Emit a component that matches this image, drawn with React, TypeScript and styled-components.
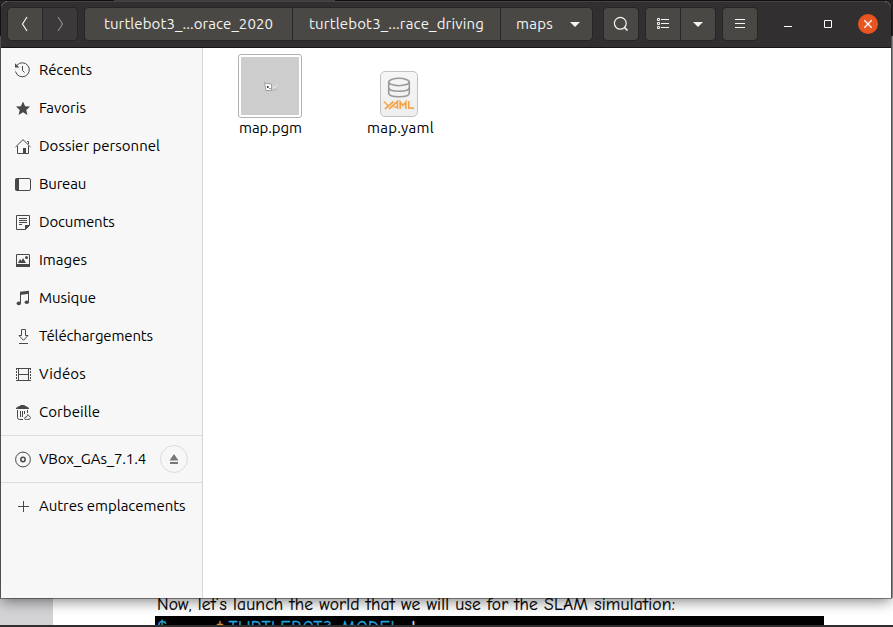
import React, { useLayoutEffect, useRef } from "react";
import styled, { createGlobalStyle } from "styled-components";

const GlobalStyle = createGlobalStyle`
  * { box-sizing: border-box; }
  body { margin: 0; overflow: hidden; background: #2c2a2b; }
`;

const Desktop = styled.div`
  width: 893px;
  height: 627px;
  display: flex;
  flex-direction: column;
  overflow: hidden;
  background: linear-gradient(#2b292a 0 36px, #a8a8a8 36px 100%);
  font: 15px/18px Ubuntu, "Noto Sans", sans-serif;
  color: #000;
`;

const TopEdge = styled.div`
  height: 1px;
  flex: none;
  background: linear-gradient(90deg, #222021 0 114px, #777 114px 335px, #222021 335px);
`;

const Window = styled.main`
  position: relative;
  z-index: 1;
  width: 890px;
  height: 597px;
  flex: none;
  margin-left: 1px;
  display: flex;
  flex-direction: column;
  background: #fff;
  border-radius: 7px 7px 0 0;
  box-shadow: 0 0 0 1px rgba(0, 0, 0, 0.38), 0 3px 14px rgba(0, 0, 0, 0.5);
`;

const HeaderBar = styled.header`
  height: 47px;
  flex: none;
  display: flex;
  padding: 5px 0 0 6px;
  background: #322f30;
  border-top: 1px solid #454243;
  border-bottom: 1px solid #1b1219;
  border-radius: 7px 7px 0 0;
  color: #f4f4f2;
`;

const ButtonGroup = styled.div<{ $gap: number }>`
  display: flex;
  height: 34px;
  margin-right: ${(p) => p.$gap}px;
  border: 1px solid #282526;
  border-radius: 5px;
  overflow: hidden;
`;

const HeaderButton = styled.button<{ $width: number; $dim?: boolean }>`
  width: ${(p) => p.$width}px;
  flex: none;
  display: flex;
  align-items: center;
  justify-content: center;
  padding: 0;
  border: 0;
  font: inherit;
  text-align: left;
  color: ${(p) => (p.$dim ? "#8b8987" : "#f4f4f2")};
  background: ${(p) => (p.$dim ? "#3b3939" : "#4a4845")};
  & + & { border-left: 1px solid #282526; }
  svg { flex: none; }
`;

const PathMenu = styled.span`
  display: flex;
  align-items: center;
  gap: 14px;
  padding-left: 6px;
`;

const WindowButton = styled.button<{ $close?: boolean; $gap: number }>`
  width: 20px;
  height: 20px;
  flex: none;
  display: grid;
  place-items: center;
  margin: 7px 0 0 ${(p) => p.$gap}px;
  padding: 0;
  border: 0;
  border-radius: 50%;
  color: #fff;
  background: ${(p) => (p.$close ? "#e95420" : "transparent")};
`;

const Body = styled.div`
  flex: 1;
  display: flex;
  min-height: 0;
`;

const Sidebar = styled.nav`
  width: 202px;
  flex: none;
  padding-top: 3px;
  background: #f7f7f7;
  border-right: 1px solid #d6d6d6;
`;

const PlaceRow = styled.div`
  height: 38px;
  display: flex;
  align-items: center;
  gap: 8px;
  padding-left: 13px;
  svg { flex: none; color: #484848; }
`;

const PlaceGroup = styled.div`
  padding: 4px 0;
  &:first-child { padding-top: 0; }
  & + & { border-top: 1px solid #dcdcdc; }
`;

const EjectButton = styled.button`
  width: 28px;
  height: 28px;
  display: grid;
  place-items: center;
  margin-left: 6px;
  padding: 0;
  border: 1px solid #dcdcdc;
  border-radius: 50%;
  background: #f7f7f7;
`;

const Files = styled.section`
  display: flex;
  align-items: flex-start;
  gap: 64px;
  padding: 6px 0 0 35px;
`;

const FileItem = styled.figure`
  margin: 0;
  display: flex;
  flex-direction: column;
  align-items: center;
`;

const Preview = styled.div<{ $shift?: number }>`
  height: 65px;
  display: flex;
  align-items: flex-end;
  margin-right: ${(p) => p.$shift ?? 0}px;
`;

const Behind = styled.div`
  height: 29px;
  flex: none;
  display: flex;
  background: #fff;
  border-bottom: 2px solid #302e2f;
`;

const Margin = styled.div`
  width: 53px;
  background: #d3d3d5;
`;

const Page = styled.div`
  padding-left: 102px;
  font-family: "Comic Sans MS", "Comic Neue", Lato, sans-serif;
`;

const Sentence = styled.p`
  height: 18px;
  margin: 0 0 0 2px;
  font-size: 17.5px;
  line-height: 12px;
  -webkit-text-stroke: 0.2px #000;
`;

const Terminal = styled.div`
  width: 669px;
  height: 9px;
  display: flex;
  padding-left: 2px;
  overflow: hidden;
  background: #000;
  color: #20a8e0;
  font-size: 17.5px;
  line-height: 23px;
  -webkit-text-stroke: 0.3px currentColor;
`;

const Command = styled.span<{ $gap: number; $color?: string }>`
  margin-left: ${(p) => p.$gap}px;
  color: ${(p) => p.$color ?? "inherit"};
`;

const FittedText = styled.span<{ $width: number }>`
  display: block;
  width: ${(p) => p.$width}px;
  white-space: pre;
`;

/** Tracks a label so that its letters fill the given width. */
function Fit({ width, children }: { width: number; children: string }) {
  const ref = useRef<HTMLSpanElement>(null);
  useLayoutEffect(() => {
    const el = ref.current!;
    el.style.letterSpacing = "0px";
    const range = document.createRange();
    range.selectNodeContents(el);
    const natural = range.getBoundingClientRect().width;
    el.style.letterSpacing = `${(width - natural) / children.length}px`;
  }, [width, children]);
  return <FittedText ref={ref} $width={width}>{children}</FittedText>;
}

function Icon({ children, size = 16 }: { children: React.ReactNode; size?: number }) {
  return (
    <svg width={size} height={size} viewBox={`0 0 ${size} ${size}`} fill="none" stroke="currentColor">
      {children}
    </svg>
  );
}

const Caret = () => (
  <Icon><path d="M3 6h10l-5 5z" fill="currentColor" stroke="none" /></Icon>
);

const places: { label: string; width: number; icon: React.ReactNode }[] = [
  {
    label: "Récents", width: 53,
    icon: <><path d="M3 3.2A7 7 0 1 1 1.5 9.5M1.1 7.8v.3" /><path d="M1 1.2v4.3h4.3z" fill="currentColor" stroke="none" /><path d="M8.5 4v4.5l2 2" /></>,
  },
  {
    label: "Favoris", width: 47,
    icon: <path d="m9 1.5 2.1 4.7 4.9.4-3.7 3.3 1.1 5L9 12.3l-4.4 2.6 1.1-5L2 6.6l4.9-.4z" fill="currentColor" stroke="none" />,
  },
  {
    label: "Dossier personnel", width: 121,
    icon: <><path d="m1.5 9 7.5-7.3L16.5 9M13 3.5h1.5V6M3.5 8v7.5H9M14.5 8v7.5H12" /><path d="M9 10h3v6H9z" fill="currentColor" stroke="none" /></>,
  },
  {
    label: "Bureau", width: 47,
    icon: <><rect x="1.5" y="2.5" width="15" height="12" rx="1.5" /><path d="M1.5 2.5H5v12H1.5z" fill="currentColor" stroke="none" /></>,
  },
  {
    label: "Documents", width: 75.5,
    icon: <><path d="M2.5 1.5h13v10l-4 4h-9z" /><path d="M11 11h5l-5 5z" fill="currentColor" stroke="none" /><path d="M5 4.5h8M5 6.5h8M5 8.5h8M5 10.5h3" /></>,
  },
  {
    label: "Images", width: 48,
    icon: <><path d="M2.5 2.5h13v12h-13z" /><path d="M2 12h14v3H2zM4 11l2-4 1.5 2L9 6l3 5z" fill="currentColor" stroke="none" /><circle cx="12.5" cy="5.5" r="1.5" fill="currentColor" stroke="none" /></>,
  },
  {
    label: "Musique", width: 57,
    icon: <><path d="M6.5 13V3.5l8-1.5v10" /><path d="M6 1.8 15 .8v3L6 5z" fill="currentColor" stroke="none" /><ellipse cx="4.8" cy="13.4" rx="2.2" ry="1.8" fill="currentColor" stroke="none" /><ellipse cx="12.8" cy="12.2" rx="2.2" ry="1.8" fill="currentColor" stroke="none" /></>,
  },
  {
    label: "Téléchargements", width: 114,
    icon: <path d="M7.5 1.5h4v6H14l-4.5 4.8L5 7.5h2.5zM5 15.5h9" />,
  },
  {
    label: "Vidéos", width: 47,
    icon: <><path d="M2 2.5h15M2 14.5h15M4.5 2v13M14.5 2v13M4.5 8.5h10" /><path d="M2.5 2v13M16.5 2v13" strokeDasharray="2 1" /></>,
  },
  {
    label: "Corbeille", width: 61,
    icon: <><path d="M6.5 2.5v-1h4v1M3.5 6v7.5q0 2 2 2H9M13.5 6v3M6.5 7v6M8.5 7v6M10.5 7v3" /><path d="M2 5V4l3-2h7l3 2v1z" fill="currentColor" stroke="none" /><path d="M11 15.4h4.5l1-1.6-1.2-1.8-1.5-1.5-.8 2-2 .8-.5 1.1z" strokeWidth=".9" /></>,
  },
];

const Thumbnail = () => (
  <svg width="64" height="65" viewBox="0 0 64 65">
    <rect x=".5" y=".5" width="63" height="63" rx="2.5" fill="#fff" stroke="#b2b2ac" />
    <path d="M3 3h58v58H3z" fill="#cdcdcd" />
    <path d="m26.5 28.5 1.5 1 5.5.5v6.5H28z" fill="#fff" stroke="#8d8d8d" strokeWidth=".8" />
    <path d="M29 32h1.5v2H29zM31.5 34h1v1h-1z" fill="#333" />
    <path d="m34.5 35 1-2.5 1.5 1.5 2-4" fill="none" stroke="#e4e4e4" strokeWidth="1" />
    <path d="m34 36 2 .3 3-1.3" fill="none" stroke="#aaa" strokeWidth=".7" />
  </svg>
);

const YamlFile = () => (
  <svg width="38" height="49" viewBox="0 0 38 49">
    <defs>
      <linearGradient id="paper" x2="0" y2="1"><stop stopColor="#f6f6f6" /><stop offset="1" stopColor="#eeeeee" /></linearGradient>
    </defs>
    <rect x=".5" y="1.5" width="37" height="45" rx="4.5" fill="url(#paper)" stroke="#c2c2c2" />
    <g fill="none" stroke="#999" strokeWidth="1.6">
      <ellipse cx="19" cy="12" rx="10.3" ry="3.7" />
      <path d="M8.7 12v11c0 5 20.6 5 20.6 0V12M8.7 17.5c0 5 20.6 5 20.6 0" />
    </g>
    <g fill="none" stroke="#f5a64b" strokeWidth="1.7">
      <path d="m3.8 31.5 4.2 4M13.5 31.5 5 39M9 39l8.5-7.5V39M13.5 37h4M20.2 39v-7l2.8 3.6 2.8-3.6v7M28.8 31v7.2H34" />
    </g>
  </svg>
);

export default function App() {
  return (
    <>
      <GlobalStyle />
      <Desktop>
        <TopEdge />
        <Window>
          <HeaderBar>
            <ButtonGroup $gap={6}>
              <HeaderButton $width={34} aria-label="Précédent">
                <Icon><path d="M10 1 5.5 8l4.5 7" strokeWidth="1.2" /></Icon>
              </HeaderButton>
              <HeaderButton $width={35} $dim aria-label="Suivant">
                <Icon><path d="M6 1l4.5 7L6 15" strokeWidth="1.2" /></Icon>
              </HeaderButton>
            </ButtonGroup>
            <ButtonGroup $gap={10}>
              <HeaderButton $width={207}><Fit width={169}>turtlebot3_...orace_2020</Fit></HeaderButton>
              <HeaderButton $width={208}><Fit width={175}>turtlebot3_...race_driving</Fit></HeaderButton>
              <HeaderButton $width={92}><PathMenu><Fit width={37}>maps</Fit><Caret /></PathMenu></HeaderButton>
            </ButtonGroup>
            <ButtonGroup $gap={6}>
              <HeaderButton $width={34} aria-label="Rechercher">
                <Icon><circle cx="7.3" cy="7.3" r="5.9" strokeWidth="1.2" /><path d="m11.5 11.5 3 3" strokeWidth="1.7" /></Icon>
              </HeaderButton>
            </ButtonGroup>
            <ButtonGroup $gap={6}>
              <HeaderButton $width={34} aria-label="Vue en liste">
                <Icon><path d="M2.5 2.5h2v2h-2zM2.5 6.5h2v2h-2zM2.5 10.5h2v2h-2zM6 3.5h8M6 7.5h8M6 11.5h8" /></Icon>
              </HeaderButton>
              <HeaderButton $width={35} aria-label="Options de vue"><Caret /></HeaderButton>
            </ButtonGroup>
            <ButtonGroup $gap={0}>
              <HeaderButton $width={34} aria-label="Menu"><Icon><path d="M3 3.5h10M3 7.5h10M3 11.5h10" /></Icon></HeaderButton>
            </ButtonGroup>
            <WindowButton $gap={20} aria-label="Réduire"><Icon><path d="M4 10.5h8" /></Icon></WindowButton>
            <WindowButton $gap={20} aria-label="Agrandir"><Icon><path d="M4.5 4.5h7v7h-7z" /></Icon></WindowButton>
            <WindowButton $gap={20} $close aria-label="Fermer"><Icon><path d="m4.3 4.3 7.4 7.4m0-7.4-7.4 7.4" strokeWidth="1.3" /></Icon></WindowButton>
          </HeaderBar>
          <Body>
            <Sidebar>
              <PlaceGroup>
                {places.map((p) => (
                  <PlaceRow key={p.label}><Icon size={17}>{p.icon}</Icon><Fit width={p.width}>{p.label}</Fit></PlaceRow>
                ))}
              </PlaceGroup>
              <PlaceGroup>
                <PlaceRow>
                  <Icon size={17}><circle cx="9" cy="8.5" r="7.4" /><circle cx="9" cy="8.5" r="2.2" strokeWidth="1.5" /></Icon>
                  <Fit width={107}>VBox_GAs_7.1.4</Fit>
                  <EjectButton aria-label="Éjecter"><Icon><path d="M3.5 9.5 8 3l4.5 6.5zM4 11h8v2H4z" fill="#777" stroke="none" /></Icon></EjectButton>
                </PlaceRow>
              </PlaceGroup>
              <PlaceGroup>
                <PlaceRow><Icon size={17}><path d="M4 8.5h11M9.5 3v11" /></Icon><Fit width={146.5}>Autres emplacements</Fit></PlaceRow>
              </PlaceGroup>
            </Sidebar>
            <Files>
              <FileItem><Preview $shift={1}><Thumbnail /></Preview><Fit width={63}>map.pgm</Fit></FileItem>
              <FileItem><Preview $shift={3}><YamlFile /></Preview><Fit width={67}>map.yaml</Fit></FileItem>
            </Files>
          </Body>
        </Window>
        <Behind>
          <Margin />
          <Page>
            <Sentence><Fit width={518}>Now, let’s launch the world that we will use for the SLAM simulation:</Fit></Sentence>
            <Terminal>
              <Command $gap={0}>$</Command>
              <Command $gap={50} $color="#d89530">t</Command>
              <Command $gap={6}><Fit width={171}>TURTLEBOT3_MODEL</Fit></Command>
              <Command $gap={12} $color="#eee">l</Command>
            </Terminal>
          </Page>
        </Behind>
      </Desktop>
    </>
  );
}
